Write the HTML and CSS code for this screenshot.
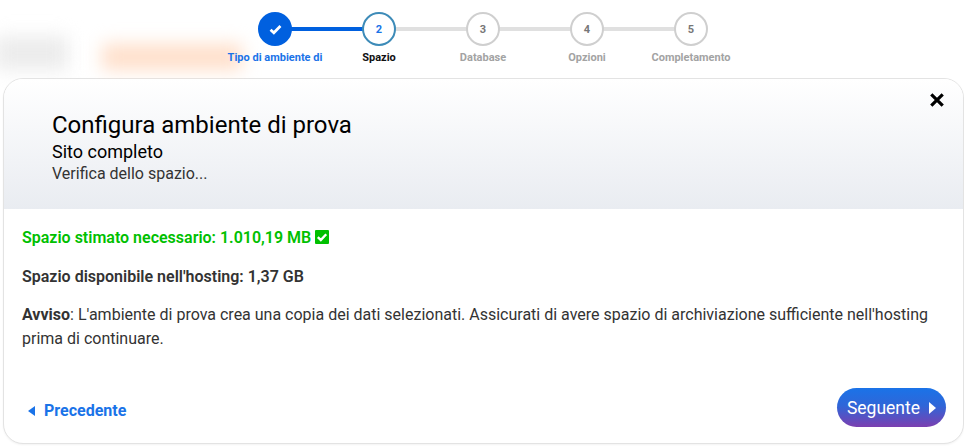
FILE: index.html
```html
<!DOCTYPE html>
<html lang="it">
<head>
<meta charset="utf-8">
<title>Configura ambiente di prova</title>
<link rel="stylesheet" href="styles.css">
</head>
<body>
<div class="page">
  <div class="blur blur-grey"></div>
  <div class="blur blur-orange"></div>
  <ol class="stepper">
    <li class="step done">
      <span class="circle">
        <svg class="tick" viewBox="0 0 14 12" width="13" height="11"><path d="M1.6 6.2 5.2 9.6 12.4 2.2" fill="none" stroke="#fff" stroke-width="3"/></svg>
      </span>
      <span class="label">Tipo di ambiente di</span>
    </li>
    <li class="step current"><span class="circle">2</span><span class="label">Spazio</span></li>
    <li class="step"><span class="circle">3</span><span class="label">Database</span></li>
    <li class="step"><span class="circle">4</span><span class="label">Opzioni</span></li>
    <li class="step"><span class="circle">5</span><span class="label">Completamento</span></li>
  </ol>
  <main class="card">
    <header class="card-head">
      <h1>Configura ambiente di prova</h1>
      <h2>Sito completo</h2>
      <p>Verifica dello spazio...</p>
      <button class="close" aria-label="Chiudi">
        <svg viewBox="0 0 14 14" width="16" height="16"><path d="M2 2 12 12M12 2 2 12" stroke="#000" stroke-width="2.8" fill="none"/></svg>
      </button>
    </header>
    <section class="card-body">
      <p class="need">Spazio stimato necessario: 1.010,19 MB
        <svg class="okbox" viewBox="0 0 14 14" width="14" height="14"><rect width="14" height="14" rx="1" fill="#00c000"/><path d="M2.8 7.2 5.8 10 11.2 4.2" fill="none" stroke="#fff" stroke-width="2.4"/></svg>
      </p>
      <p class="avail">Spazio disponibile nell'hosting: 1,37 GB</p>
      <p class="warn"><b>Avviso</b>: L'ambiente di prova crea una copia dei dati selezionati. Assicurati di avere spazio di archiviazione sufficiente nell'hosting prima di continuare.</p>
    </section>
    <footer class="card-foot">
      <a class="prev" href="#"><span class="tri tri-left"></span>Precedente</a>
      <button class="next">Seguente<span class="tri tri-right"></span></button>
    </footer>
  </main>
</div>
</body>
</html>
```

FILE: styles.css
```css
* { box-sizing: border-box; }
html, body { margin: 0; padding: 0; background: #fff; }
body { font-family: Roboto, "Liberation Sans", sans-serif; color: #333; }
.page { position: relative; width: 964px; height: 446px; overflow: hidden; padding-top: 12px; }

.blur { position: absolute; filter: blur(9px); }
.blur-grey { left: -4px; top: 36px; width: 72px; height: 34px; background: #ececec; }
.blur-orange { left: 102px; top: 44px; width: 140px; height: 26px; background: #ffdfca; }

.stepper { position: relative; display: flex; list-style: none; margin: 0 0 0 223px; padding: 0; height: 66px; }
.step { position: relative; width: 104px; display: flex; flex-direction: column; align-items: center; }
.step + .step::before {
  content: ""; position: absolute; top: 15px; left: -52px; width: 104px; height: 4px; background: #e0e0e0;
}
.step.current::before { background: #0060df; }
.circle {
  position: relative; z-index: 1; width: 34px; height: 34px; border-radius: 50%;
  border: 2px solid #cfcfcf; background: #fff; color: #777;
  display: flex; align-items: center; justify-content: center;
  font-size: 11px; font-weight: 700;
}
.label { margin-top: 5px; font-size: 11px; line-height: 13px; font-weight: 700; color: #a3a3a3; white-space: nowrap; }
.done .circle { background: #0060df; border-color: #0060df; }
.done .label { color: #1a73e8; }
.current .circle { border-color: #3d8bb8; color: #1a73e8; }
.current .label { color: #111; }
.tick { display: block; }

.card {
  width: 961px; height: 366px; margin-left: 3px;
  border: 1px solid #e3e3e3; border-radius: 20px; background: #fff; overflow: hidden;
  display: flex; flex-direction: column; box-shadow: 0 1px 2px rgba(0,0,0,.05);
}
.card-head {
  position: relative; height: 130px; padding: 32px 48px 0;
  background: linear-gradient(180deg, #fff 0%, #e9ecf1 100%); color: #000;
}
.card-head h1 { margin: 0; font-size: 24px; line-height: 28px; font-weight: 400; }
.card-head h2 { margin: 2px 0 0; font-size: 18px; line-height: 22px; font-weight: 400; }
.card-head p { margin: 0; font-size: 16px; line-height: 21px; color: #333; }
.close { position: absolute; top: 13px; right: 18px; padding: 0; border: 0; background: none; line-height: 0; }

.card-body { flex: 1; padding: 17px 18px 0; font-size: 16px; line-height: 24px; }
.card-body p { margin: 0 0 15px; }
.need { color: #00c000; font-weight: 600; }
.okbox { vertical-align: -1px; }
.avail { font-weight: 600; color: #333; }
.warn { margin-top: -1px !important; }
.warn b { font-weight: 700; }

.card-foot { display: flex; align-items: flex-start; justify-content: space-between; height: 55px; padding: 0 17px 0 24px; }
.prev { display: flex; align-items: center; margin-top: 13px; color: #1a73e8; font-size: 16px; font-weight: 700; text-decoration: none; }
.next {
  display: flex; align-items: center; height: 39px; padding: 0 10px; border: 0; border-radius: 20px;
  background: linear-gradient(180deg, #1a73e8 0%, #2f66d8 45%, #7b3fb0 100%);
  color: #fff; font-family: inherit; font-size: 17.5px; font-weight: 400;
}
.tri { display: inline-block; width: 0; height: 0; border-style: solid; }
.tri-left { border-width: 5px 7px 5px 0; border-color: transparent #1a73e8 transparent transparent; margin-right: 9px; }
.tri-right { border-width: 6.5px 0 6.5px 7px; border-color: transparent transparent transparent #fff; margin-left: 9px; }
```
